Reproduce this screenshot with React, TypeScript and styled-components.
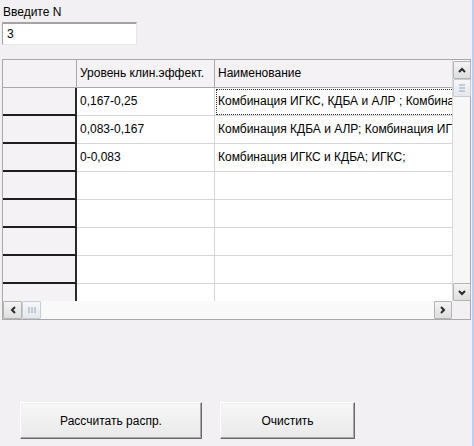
import React from 'react'
import styled, { createGlobalStyle } from 'styled-components'

const GlobalStyle = createGlobalStyle`
  html, body {
    margin: 0;
    padding: 0;
    background: #f2f0f2;
  }
`

interface Row {
  level: string
  name: string
}

const rows: Row[] = [
  { level: '0,167-0,25', name: 'Комбинация ИГКС, КДБА и АЛР ; Комбинация ИГКС и КДБА' },
  { level: '0,083-0,167', name: 'Комбинация КДБА и АЛР; Комбинация ИГКС и АЛР' },
  { level: '0-0,083', name: 'Комбинация ИГКС и КДБА; ИГКС;' },
  { level: '', name: '' },
  { level: '', name: '' },
  { level: '', name: '' },
  { level: '', name: '' },
  { level: '', name: '' },
]

const Window = styled.div`
  width: 474px;
  height: 446px;
  box-sizing: border-box;
  padding: 5px 0 0 2px;
  border-right: 2px solid #bfcdef;
  background: #f2f0f2;
  font-family: 'Liberation Sans', Tahoma, sans-serif;
  font-size: 12px;
  color: #000;
  display: flex;
  flex-direction: column;
  overflow: hidden;
`

const Label = styled.div`
  height: 15px;
  line-height: 14px;
  padding-left: 1px;
`

const NInput = styled.div`
  margin-top: 2px;
  width: 135px;
  height: 23px;
  box-sizing: border-box;
  background: #fff;
  border-top: 2px solid #a4a4a4;
  border-left: 1px solid #a4a4a4;
  border-right: 1px solid #e6e6e6;
  border-bottom: 1px solid #e6e6e6;
  padding: 2px 0 0 4px;
  line-height: 16px;
`

const Frame = styled.div`
  margin-top: 14px;
  width: 469px;
  height: 261px;
  box-sizing: border-box;
  border: 1px solid #a9a9a9;
  display: grid;
  grid-template-columns: 1fr 18px;
  grid-template-rows: 1fr 18px;
  background: #fff;
`

const Viewport = styled.div`
  overflow: hidden;
  background: #fff;
`

const GridRow = styled.div<{ $height: number }>`
  display: flex;
  height: ${p => p.$height}px;
`

const RowHead = styled.div<{ $header?: boolean }>`
  flex: 0 0 74px;
  box-sizing: border-box;
  background: #f4f2f5;
  border-right: ${p => (p.$header ? '1px solid #a8a8a8' : '2px solid #2a2a2a')};
  border-bottom: ${p => (p.$header ? '1px solid #a8a8a8' : '2px solid #1e1e1e')};
`

const Cell = styled.div<{ $width: number; $header?: boolean; $focus?: boolean }>`
  flex: 0 0 ${p => p.$width}px;
  box-sizing: border-box;
  padding: 0 3px;
  display: flex;
  align-items: center;
  padding-bottom: 2px;
  white-space: nowrap;
  overflow: hidden;
  background: ${p => (p.$header ? '#f4f2f5' : '#fff')};
  border-right: 1px solid ${p => (p.$header ? '#a8a8a8' : '#d6d6d6')};
  border-bottom: 1px solid ${p => (p.$header ? '#a8a8a8' : '#d6d6d6')};
  outline: ${p => (p.$focus ? '1px dotted #333' : 'none')};
  outline-offset: -2px;
`

const VScroll = styled.div`
  display: flex;
  flex-direction: column;
  justify-content: space-between;
  background: #f7f7f8;
  padding-top: 1px;
  border-left: 1px solid #d8d8d8;
`

const VTop = styled.div`
  display: flex;
  flex-direction: column;
`

const HScroll = styled.div`
  display: flex;
  justify-content: space-between;
  background: #f9f9fa;
`

const HLeft = styled.div`
  display: flex;
`

const Corner = styled.div`
  background: #f2f0f2;
`

const ScrollBtn = styled.div<{ $w?: number }>`
  width: ${p => p.$w ?? 18}px;
  height: 18px;
  box-sizing: border-box;
  border: 1px solid #b4b4b4;
  border-radius: 1px;
  background: linear-gradient(#f4f4f4, #dedede);
  display: flex;
  align-items: center;
  justify-content: center;
`

const Thumb = styled(ScrollBtn)`
  border-color: #c4ccd8;
  background: linear-gradient(#f6f7f9, #e4e7ec);
`

const Buttons = styled.div`
  margin-top: 82px;
  padding-left: 18px;
  display: flex;
  gap: 18px;
`

const Button = styled.button<{ $width: number }>`
  width: ${p => p.$width}px;
  height: 37px;
  box-sizing: border-box;
  font: inherit;
  color: #000;
  background: linear-gradient(#f7f7f7, #e9e9e9);
  border: 1px solid;
  border-color: #ffffff #6a6a6a #6a6a6a #ffffff;
  box-shadow: inset -1px -1px 0 #a8a8a8, inset 1px 1px 0 #f0f0f0;
  padding: 0;
`

const Chevron = ({ dir }: { dir: 'up' | 'down' | 'left' | 'right' }) => {
  const pts = {
    up: '2,7 5,4 8,7',
    down: '2,4 5,7 8,4',
    left: '7,2 4,5 7,8',
    right: '3,2 6,5 3,8',
  }[dir]
  return (
    <svg width="10" height="10" viewBox="0 0 10 10">
      <polyline points={pts} fill="none" stroke="#2b2b2b" strokeWidth="2" />
    </svg>
  )
}

const Grip = ({ vertical }: { vertical?: boolean }) => (
  <svg width="10" height="10" viewBox="0 0 10 10">
    {[2, 5, 8].map(v =>
      vertical ? (
        <line key={v} x1={v} y1="2" x2={v} y2="8" stroke="#9aa6b8" strokeWidth="1" />
      ) : (
        <line key={v} x1="2" y1={v} x2="8" y2={v} stroke="#9aa6b8" strokeWidth="1" />
      ),
    )}
  </svg>
)

export default function App() {
  return (
    <>
      <GlobalStyle />
      <Window>
        <Label>Введите N</Label>
        <NInput>3</NInput>
        <Frame>
          <Viewport>
            <GridRow $height={28}>
              <RowHead $header />
              <Cell $width={138} $header>
                Уровень клин.эффект.
              </Cell>
              <Cell $width={320} $header>
                Наименование
              </Cell>
            </GridRow>
            {rows.map((r, i) => (
              <GridRow key={i} $height={28}>
                <RowHead />
                <Cell $width={138}>{r.level}</Cell>
                <Cell $width={320} $focus={i === 0}>
                  {r.name}
                </Cell>
              </GridRow>
            ))}
          </Viewport>
          <VScroll>
            <VTop>
              <ScrollBtn>
                <Chevron dir="up" />
              </ScrollBtn>
              <Thumb>
                <Grip />
              </Thumb>
            </VTop>
            <ScrollBtn>
              <Chevron dir="down" />
            </ScrollBtn>
          </VScroll>
          <HScroll>
            <HLeft>
              <ScrollBtn $w={19}>
                <Chevron dir="left" />
              </ScrollBtn>
              <Thumb $w={19}>
                <Grip vertical />
              </Thumb>
            </HLeft>
            <ScrollBtn $w={18}>
              <Chevron dir="right" />
            </ScrollBtn>
          </HScroll>
          <Corner />
        </Frame>
        <Buttons>
          <Button $width={182}>Рассчитать распр.</Button>
          <Button $width={135}>Очистить</Button>
        </Buttons>
      </Window>
    </>
  )
}
